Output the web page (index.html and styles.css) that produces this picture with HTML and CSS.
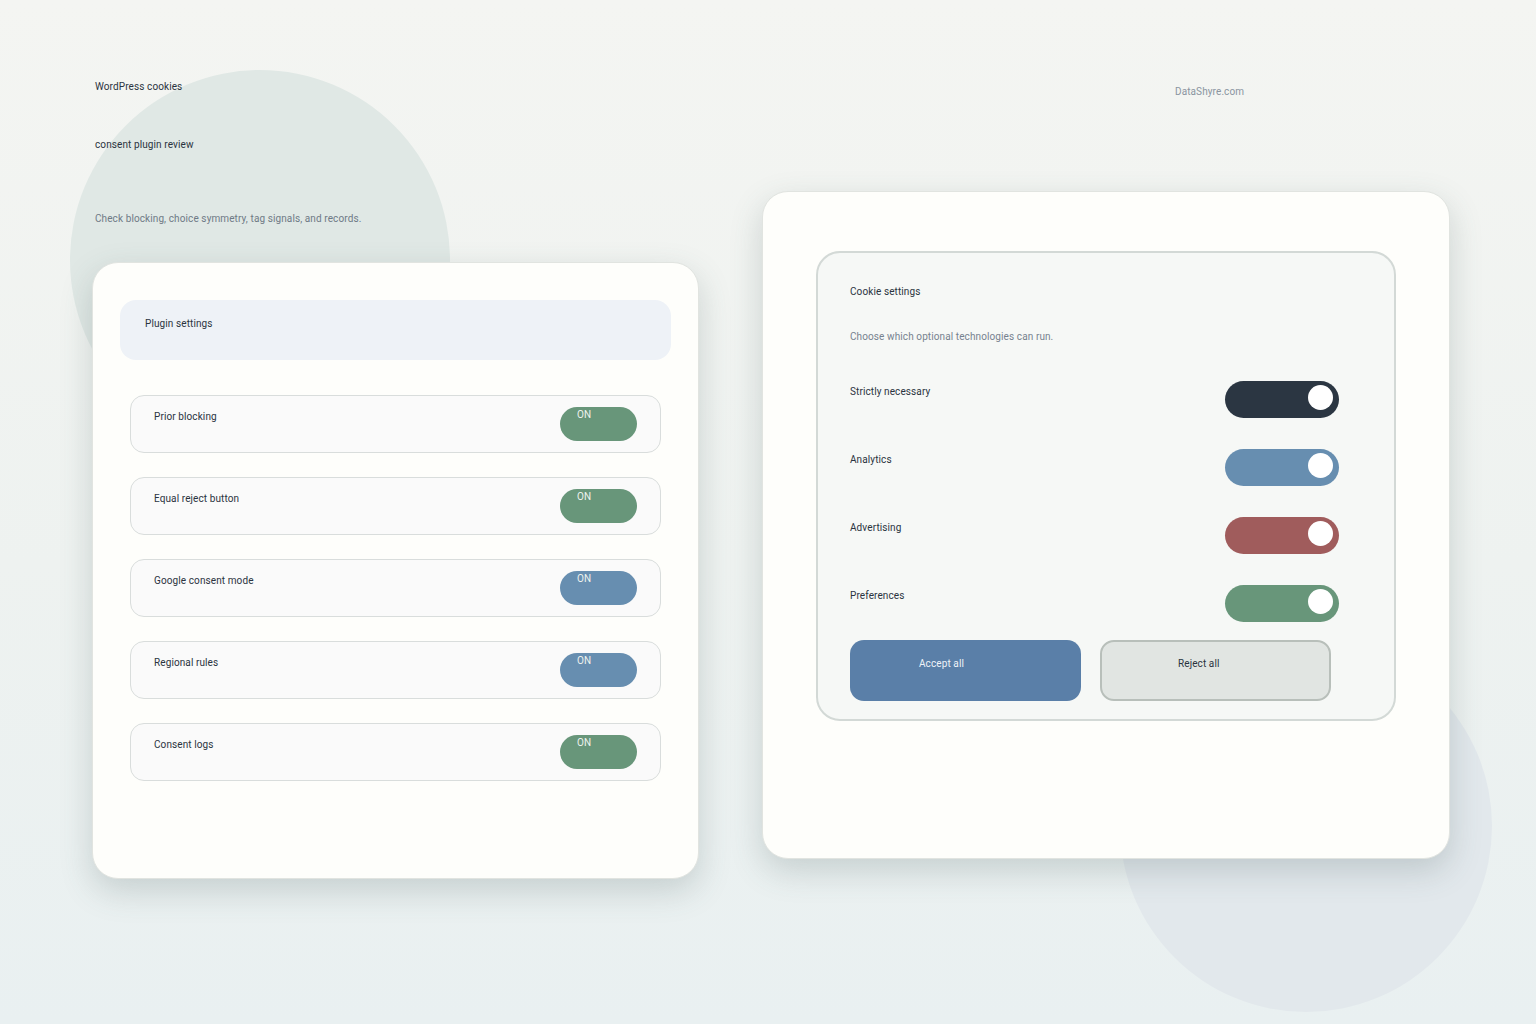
FILE: index.html
```html
<!DOCTYPE html>
<html lang="en">
<head>
  <meta charset="UTF-8">
  <meta name="viewport" content="width=device-width, initial-scale=1.0">
  <title>WordPress cookies consent plugin review</title>
  <link rel="stylesheet" href="styles.css">
</head>
<body>
  <!-- Background shapes -->
  <div class="blob blob-left"></div>
  <div class="blob blob-right"></div>

  <div class="page">
    <!-- Left column: intro + plugin card -->
    <div class="column column-left">
      <h1 class="title">WordPress cookies<br>consent plugin review</h1>
      <p class="subtitle">Check blocking, choice symmetry, tag signals, and records.</p>

      <div class="card plugin-card">
        <div class="plugin-header">
          <span>Plugin settings</span>
        </div>

        <div class="plugin-list">
          <div class="plugin-row">
            <span class="row-label">Prior blocking</span>
            <span class="pill pill-green">ON</span>
          </div>
          <div class="plugin-row">
            <span class="row-label">Equal reject button</span>
            <span class="pill pill-green">ON</span>
          </div>
          <div class="plugin-row">
            <span class="row-label">Google consent mode</span>
            <span class="pill pill-blue">ON</span>
          </div>
          <div class="plugin-row">
            <span class="row-label">Regional rules</span>
            <span class="pill pill-blue">ON</span>
          </div>
          <div class="plugin-row">
            <span class="row-label">Consent logs</span>
            <span class="pill pill-green">ON</span>
          </div>
        </div>
      </div>
    </div>

    <!-- Right column: brand + banner preview -->
    <div class="column column-right">
      <div class="brand">DataShyre.com</div>

      <div class="card banner-card">
        <div class="banner">
          <div class="banner-title">Cookie settings</div>
          <div class="banner-text">Choose which optional technologies can run.</div>

          <div class="toggle-list">
            <div class="toggle-row">
              <span class="row-label">Strictly necessary</span>
              <span class="toggle toggle-dark"><span class="knob"></span></span>
            </div>
            <div class="toggle-row">
              <span class="row-label">Analytics</span>
              <span class="toggle toggle-blue"><span class="knob"></span></span>
            </div>
            <div class="toggle-row">
              <span class="row-label">Advertising</span>
              <span class="toggle toggle-red"><span class="knob"></span></span>
            </div>
            <div class="toggle-row">
              <span class="row-label">Preferences</span>
              <span class="toggle toggle-green"><span class="knob"></span></span>
            </div>
          </div>

          <div class="actions">
            <div class="btn btn-accept">Accept all</div>
            <div class="btn btn-reject">Reject all</div>
          </div>
        </div>
      </div>
    </div>
  </div>
</body>
</html>
```

FILE: styles.css
```css
/* General Reset */
* {
  margin: 0;
  padding: 0;
  box-sizing: border-box;
}

html, body {
  height: 100%;
  width: 100%;
  overflow: hidden;
}

body {
  position: relative;
  font-family: 'Roboto', 'Liberation Sans', sans-serif;
  font-size: 10px;
  line-height: 14px;
  letter-spacing: 0.1px;
  color: #2a3340;
  background: linear-gradient(180deg, #f4f5f2 0%, #eef2f0 55%, #e9f0f1 100%);
}

/* Background shapes */
.blob {
  position: absolute;
  border-radius: 50%;
  z-index: 0;
}

.blob-left {
  left: 70px;
  top: 70px;
  width: 380px;
  height: 380px;
  background-color: #e0e8e5;
}

.blob-right {
  left: 1120px;
  top: 640px;
  width: 372px;
  height: 372px;
  background-color: #e2e8ec;
}

/* Page layout */
.page {
  position: relative;
  z-index: 1;
  display: flex;
  gap: 63px;
  padding: 58px 0 0 92px;
}

.column {
  display: flex;
  flex-direction: column;
}

.column-left {
  width: 607px;
}

.column-right {
  width: 688px;
}

/* Intro */
.title {
  font-size: 10px;
  font-weight: 400;
  line-height: 58px;
  padding-left: 3px;
  color: #2a3340;
}

.subtitle {
  margin-top: 38px;
  padding-left: 3px;
  color: #6f7a85;
}

.brand {
  margin-top: 27px;
  padding-left: 413px;
  color: #8a94a0;
}

/* Cards */
.card {
  background-color: #fefefb;
  border: 1px solid #e1e4e0;
  border-radius: 26px;
  box-shadow: 0 12px 32px rgba(70, 90, 90, 0.22);
}

.plugin-card {
  margin-top: 36px;
  height: 617px;
  padding: 37px 27px;
}

.plugin-header {
  height: 60px;
  padding: 17px 25px;
  background-color: #eef2f7;
  border-radius: 16px;
}

.plugin-list {
  display: flex;
  flex-direction: column;
  gap: 24px;
  margin: 35px 10px 0;
}

.plugin-row {
  height: 58px;
  display: flex;
  justify-content: space-between;
  align-items: flex-start;
  padding: 11px 23px 0 23px;
  background-color: #fafafa;
  border: 1px solid #d9dddc;
  border-radius: 14px;
}

.row-label {
  margin-top: 3px;
}

.pill {
  width: 77px;
  height: 34px;
  padding: 1px 17px;
  border-radius: 17px;
  color: #eef3ee;
  letter-spacing: 0;
}

.pill-green {
  background-color: #68967a;
}

.pill-blue {
  background-color: #678eb0;
}

/* Banner preview */
.banner-card {
  margin-top: 92px;
  height: 668px;
  padding: 59px 53px;
}

.banner {
  height: 470px;
  padding: 32px 32px 18px;
  background-color: #f6f8f6;
  border: 2px solid #d3d9d6;
  border-radius: 24px;
}

.banner-text {
  margin-top: 31px;
  color: #76828f;
}

.toggle-list {
  display: flex;
  flex-direction: column;
  gap: 31px;
  margin-top: 37px;
  width: 489px;
}

.toggle-row {
  display: flex;
  justify-content: space-between;
  align-items: flex-start;
}

.toggle-row .row-label {
  margin-top: 4px;
}

.toggle {
  position: relative;
  width: 114px;
  height: 37px;
  border-radius: 19px;
}

.knob {
  position: absolute;
  right: 6px;
  top: 4px;
  width: 25px;
  height: 25px;
  border-radius: 50%;
  background-color: #ffffff;
}

.toggle-dark {
  background-color: #2b3642;
}

.toggle-blue {
  background-color: #678eb0;
}

.toggle-red {
  background-color: #a05c5c;
}

.toggle-green {
  background-color: #68967a;
}

/* Buttons */
.actions {
  display: flex;
  gap: 19px;
  margin-top: 18px;
}

.btn {
  width: 231px;
  height: 61px;
  padding-top: 17px;
  border-radius: 14px;
}

.btn-accept {
  padding-left: 69px;
  background-color: #5a7fa8;
  color: #eef3f8;
}

.btn-reject {
  padding-top: 15px;
  padding-left: 76px;
  background-color: #e1e5e2;
  border: 2px solid #b8bfba;
  color: #2a3340;
}
```
